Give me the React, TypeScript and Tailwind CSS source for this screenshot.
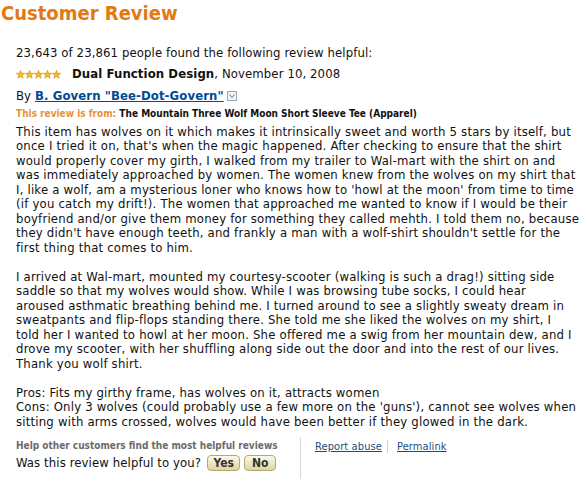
const review = [
  [
    "This item has wolves on it which makes it intrinsically sweet and worth 5 stars by itself, but",
    "once I tried it on, that's when the magic happened. After checking to ensure that the shirt",
    "would properly cover my girth, I walked from my trailer to Wal-mart with the shirt on and",
    "was immediately approached by women. The women knew from the wolves on my shirt that",
    "I, like a wolf, am a mysterious loner who knows how to 'howl at the moon' from time to time",
    "(if you catch my drift!). The women that approached me wanted to know if I would be their",
    "boyfriend and/or give them money for something they called mehth. I told them no, because",
    "they didn't have enough teeth, and frankly a man with a wolf-shirt shouldn't settle for the",
    "first thing that comes to him.",
  ],
  [
    "I arrived at Wal-mart, mounted my courtesy-scooter (walking is such a drag!) sitting side",
    "saddle so that my wolves would show. While I was browsing tube socks, I could hear",
    "aroused asthmatic breathing behind me. I turned around to see a slightly sweaty dream in",
    "sweatpants and flip-flops standing there. She told me she liked the wolves on my shirt, I",
    "told her I wanted to howl at her moon. She offered me a swig from her mountain dew, and I",
    "drove my scooter, with her shuffling along side out the door and into the rest of our lives.",
    "Thank you wolf shirt.",
  ],
  [
    "Pros: Fits my girthy frame, has wolves on it, attracts women",
    "Cons: Only 3 wolves (could probably use a few more on the 'guns'), cannot see wolves when",
    "sitting with arms crossed, wolves would have been better if they glowed in the dark.",
  ],
];

export default function App() {
  return (
    <div className="w-[588px] h-[480px] bg-white overflow-hidden font-['DejaVu_Sans_Condensed','DejaVu_Sans',Verdana,sans-serif] text-[#111]">
      <h1 className="pl-[1px] pt-[1px] text-[20px] leading-[24px] font-bold text-[#e47911]">Customer Review</h1>

      <div className="pl-[16px] pr-[4px] pt-[20px] text-[13px] leading-[16px]">
        <p className="tracking-[0.1px]">23,643 of 23,861 people found the following review helpful:</p>

        <div className="mt-[5px] flex items-center">
          <Stars />
          <span className="ml-[11px] tracking-[0.1px]">
            <b>Dual Function Design</b>, November 10, 2008
          </span>
        </div>

        <div className="mt-[6px] flex items-center tracking-[0.1px]">
          <span>By&nbsp;</span>
          <a className="font-bold text-[#004b91] underline">B. Govern "Bee-Dot-Govern"</a>
          <span className="ml-[3px] inline-flex h-[10px] w-[10px] items-center justify-center border border-[#9aa5b3] bg-[#f4f6f8]">
            <svg width="6" height="4" viewBox="0 0 6 4">
              <path d="M0.5 0.5 L3 3.5 L5.5 0.5" fill="none" stroke="#5a6b80" strokeWidth="1" />
            </svg>
          </span>
        </div>

        <p className="mt-[3px] text-[10px] leading-[14px] font-bold">
          <span className="text-[#e8913a]">This review is from: </span>
          The Mountain Three Wolf Moon Short Sleeve Tee (Apparel)
        </p>

        <div className="mt-[3.5px] leading-[14.5px] tracking-[0.2px] space-y-[14.5px]">
          {review.map((para, i) => (
            <p key={i}>
              {para.map((line, j) => (
                <span key={j} className="block whitespace-nowrap">
                  {line}
                </span>
              ))}
            </p>
          ))}
        </div>

        <div className="mt-[8px] flex">
          <div className="w-[285px] flex-none border-r border-[#d8d8d8] pt-[3px] pb-[8px]">
            <p className="text-[10px] leading-[12px] font-bold text-[#6b6b6b] whitespace-nowrap">Help other customers find the most helpful reviews</p>
            <div className="mt-[3px] flex items-center whitespace-nowrap">
              <span className="tracking-[0.1px]">Was this review helpful to you?</span>
              <button className="ml-[6px] flex-none h-[16px] w-[33px] rounded-[4px] border border-[#b5a877] bg-gradient-to-b from-[#fdfae8] to-[#ded3a0] text-[12px] leading-[14px] font-semibold text-[#333]">Yes</button>
              <button className="ml-[4px] flex-none h-[16px] w-[32px] rounded-[4px] border border-[#b5a877] bg-gradient-to-b from-[#fdfae8] to-[#ded3a0] text-[12px] leading-[14px] font-semibold text-[#333]">No</button>
            </div>
          </div>
          <div className="pl-[14px] pt-[3px] flex items-start text-[11px] leading-[13px] tracking-[0.1px] whitespace-nowrap">
            <a className="text-[#1a4d7e] underline">Report abuse</a>
            <span className="ml-[5px] mr-[9px] h-[13px] border-l border-[#d0d0d0]" />
            <a className="text-[#1a4d7e] underline">Permalink</a>
          </div>
        </div>
      </div>
    </div>
  );
}

function Stars() {
  return (
    <span className="flex">
      {[0, 1, 2, 3, 4].map((i) => (
        <svg key={i} width="9" height="9" viewBox="0 0 10 10">
          <path
            d="M5 0.4 L6.2 3.6 L9.6 3.7 L6.9 5.8 L7.9 9.2 L5 7.2 L2.1 9.2 L3.1 5.8 L0.4 3.7 L3.8 3.6 Z"
            fill="#f5bd2a"
            stroke="#d08a12"
            strokeWidth="0.7"
          />
        </svg>
      ))}
    </span>
  );
}
